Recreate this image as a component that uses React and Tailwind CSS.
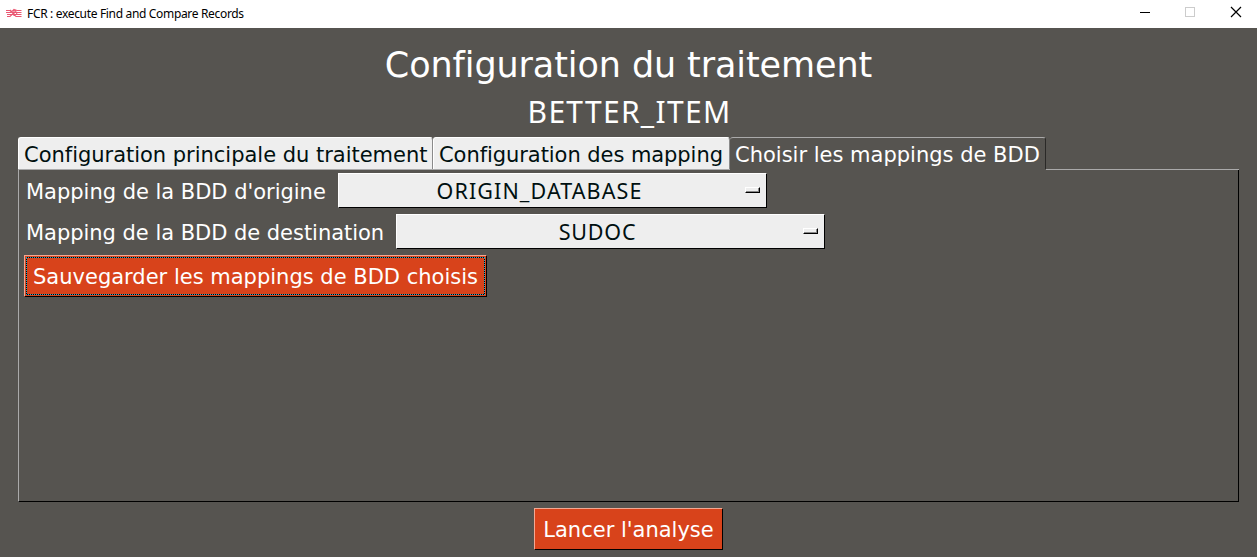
const Tab = ({ w, text, children }) => (
  <div className={`relative h-8 shrink-0 overflow-hidden rounded-t-[3px] border-t border-l border-r border-white border-r-[#8a8a8a] bg-[#eeeeee] pl-[5px] leading-[34px] text-[#001010] ${w}`}>
    <span className={`block whitespace-nowrap ${text}`}>{children}</span>
  </div>
);

const Select = ({ text, children }) => (
  <div className="flex h-[35px] w-[429px] items-center border border-t-white border-l-white border-r-black border-b-black bg-[#eeeeee] pr-[6px] text-[#001010]">
    <div className="flex-1 pr-[5px] text-center font-['Noto_Sans',sans-serif] text-[21.5px] leading-[34px]">
      <span className={text}>{children}</span>
    </div>
    <div className="-mt-px h-[6px] w-[15px] border border-t-white border-l-white border-r-black border-b-black bg-[#eeeeee]">
      <div className="h-full w-full border-r border-b border-[#888]" />
    </div>
  </div>
);

export default function App() {
  return (
    <div className="flex h-[557px] w-[1257px] flex-col overflow-hidden bg-[#565450] font-['DejaVu_Sans',sans-serif] text-[21px] whitespace-nowrap text-white [font-variant-ligatures:none]">
      <header className="flex h-7 shrink-0 items-center bg-white text-black">
        <svg className="-mt-1 ml-1.5 h-[11px] w-4 shrink-0" viewBox="0 0 16 11" fill="none" stroke="#ea5873" strokeWidth="1.1">
          <path d="M0 3.5h4l2 2h9.5M0 5.5h5l3-3 3 1h4.5M1 7.5h14.5M1 9.5h3l3-3 3 3h5.500M4 3l3 3M8 2v7M9 3l2 4" />
        </svg>
        <h1 className="-mt-px ml-[5px] w-[220px] font-['Noto_Sans',sans-serif] text-[12px] tracking-[-0.33px]">FCR : execute Find and Compare Records</h1>
        <svg className="ml-auto h-7 w-[137px]" viewBox="0 0 137 28" fill="none" shapeRendering="crispEdges">
          <path d="M20 12.5h10" stroke="#000" />
          <rect x="65.5" y="7.5" width="9" height="9" stroke="#ccc" />
          <path d="M111 7l10 10M121 7l-10 10" stroke="#000" strokeWidth="1.2" shapeRendering="auto" />
        </svg>
      </header>
      <div className="mt-[15px] h-11 shrink-0 text-center text-[35px] leading-[44px]">
        <span className="tracking-[-0.1px]">Configuration du traitement</span>
      </div>
      <div className="h-[50px] shrink-0 pl-[2px] text-center font-['Noto_Sans',sans-serif] text-[30px] leading-[50px]">
        <span className="tracking-[1.3px]">BETTER_ITEM</span>
      </div>
      <nav className="relative ml-[18px] flex h-8 shrink-0">
        <Tab w="w-[415px]" text="tracking-[-0.02px]">Configuration principale du traitement</Tab>
        <Tab w="w-[297px]" text="tracking-[-0.06px]">Configuration des mapping</Tab>
        <div className="h-8 w-[316px] shrink-0 rounded-t-[3px] border-t border-r border-t-[#aaa] border-r-[#2a2927] pl-[5px] leading-[34px]">
          <span>Choisir les mappings de BDD</span>
        </div>
      </nav>
      <main className="ml-[18px] flex h-[333px] w-[1221px] shrink-0 flex-col">
        <div className="flex h-px shrink-0">
          <div className="w-[712px] bg-[#aaa]" />
          <div className="w-[316px]" />
          <div className="flex-1 bg-[#aaa]" />
        </div>
        <div className="flex flex-1 flex-col items-start gap-1.5 border-l border-r border-b border-l-[#aaa] border-r-black border-b-black pt-[3px] pl-[5px]">
          <div className="flex h-[35px] items-center">
            <div className="w-[314px] pt-[5px] pl-[2px]"><span className="tracking-[-0.02px]">Mapping de la BDD d'origine</span></div>
            <Select text="tracking-[1.1px]">ORIGIN_DATABASE</Select>
          </div>
          <div className="flex h-[35px] items-center">
            <div className="w-[372px] pt-[5px] pl-[2px]"><span className="tracking-[-0.03px]">Mapping de la BDD de destination</span></div>
            <Select text="tracking-[0.8px]">SUDOC</Select>
          </div>
          <button className="flex h-[42px] w-[463px] border border-t-[#f3a893] border-l-[#f3a893] border-r-black border-b-black bg-[#d8431b] p-px">
            <span className="flex h-full w-full border border-dotted border-[#28a4c4] bg-black">
              <span className="flex h-full w-full items-center justify-center bg-[#d8431b] pt-[3px]">Sauvegarder les mappings de BDD choisis</span>
            </span>
          </button>
        </div>
      </main>
      <button className="mt-1.5 ml-[534px] flex h-[42px] w-[189px] shrink-0 items-center justify-center border border-t-[#f3a893] border-l-[#f3a893] border-r-black border-b-black bg-[#d8431b] pt-[3px]">
        Lancer l'analyse
      </button>
    </div>
  );
}
